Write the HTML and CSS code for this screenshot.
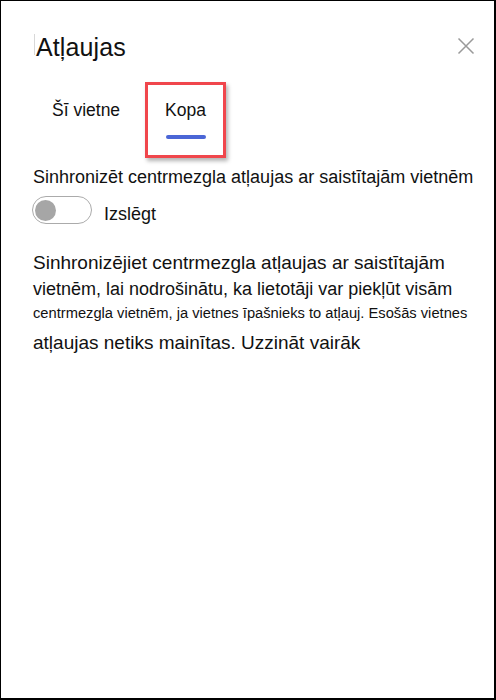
FILE: index.html
```html
<!DOCTYPE html>
<html lang="lv">
<head>
<meta charset="utf-8">
<title>Atļaujas</title>
<link rel="stylesheet" href="styles.css">
</head>
<body>
<div class="panel">
  <div class="header">
    <h1 class="title">Atļaujas</h1>
    <button class="close" aria-label="Aizvērt">
      <svg width="18" height="18" viewBox="0 0 18 18"><path d="M1.5 1.5 L16.5 16.5 M16.5 1.5 L1.5 16.5" stroke="#9a9a9a" stroke-width="1.5" fill="none"/></svg>
    </button>
  </div>
  <div class="tabs">
    <div class="tab">Šī vietne</div>
    <div class="tab active">Kopa<span class="bar"></span></div>
  </div>
  <div class="subtitle">Sinhronizēt centrmezgla atļaujas ar saistītajām vietnēm</div>
  <div class="toggle-row">
    <span class="toggle"><span class="knob"></span></span>
    <span class="toggle-label">Izslēgt</span>
  </div>
  <p class="desc">
    <span class="l1">Sinhronizējiet centrmezgla atļaujas ar saistītajām</span>
    <span class="l2">vietnēm, lai nodrošinātu, ka lietotāji var piekļūt visām</span>
    <span class="l3">centrmezgla vietnēm, ja vietnes īpašnieks to atļauj. Esošās vietnes</span>
    <span class="l4">atļaujas netiks mainītas. Uzzināt vairāk</span>
  </p>
</div>
</body>
</html>
```
FILE: styles.css
```css
html, body {
  margin: 0;
  padding: 0;
  background: #fff;
}
body {
  font-family: "Liberation Sans", Arial, sans-serif;
  color: #111;
}
.panel {
  box-sizing: border-box;
  width: 496px;
  height: 700px;
  border-top: 1px solid #000;
  border-left: 1px solid #000;
  border-right: 2px solid #000;
  border-bottom: 2px solid #000;
  padding: 31px 0 0 31px;
}
.header {
  display: flex;
  align-items: flex-start;
  justify-content: space-between;
  height: 30px;
}
.title {
  margin: 0;
  font-size: 25px;
  font-weight: normal;
  line-height: 30px;
  padding-left: 2px;
  letter-spacing: 0.1px;
}
.title::before {
  content: "";
  display: inline-block;
  width: 1px;
  height: 21px;
  background: #d8d8d8;
  margin-right: 1px;
  vertical-align: 1px;
}
.close {
  margin: 5px 19px 0 0;
  padding: 0;
  border: 0;
  background: none;
  width: 18px;
  height: 18px;
  display: flex;
}
.tabs {
  display: flex;
  gap: 5px;
  margin-top: 20px;
}
.tab {
  display: flex;
  flex-direction: column;
  align-items: center;
  border: 3px solid transparent;
  padding: 13px 17px 16px;
  font-size: 17.5px;
  line-height: 24px;
}
.tab .bar {
  display: block;
  width: 40px;
  height: 4px;
  border-radius: 2px;
  background: #4b66d6;
  margin-top: 13px;
}
.tab:not(.active)::after {
  content: "";
  display: block;
  height: 4px;
  margin-top: 13px;
}
.tab.active {
  border-color: #f0464c;
  box-shadow: 2px 3px 4px rgba(0, 0, 0, 0.3);
}
.subtitle {
  margin-top: 8px;
  font-size: 18px;
  line-height: 22px;
  padding-left: 1px;
}
.toggle-row {
  display: flex;
  align-items: flex-start;
  margin-top: 8px;
  gap: 12px;
}
.toggle {
  box-sizing: border-box;
  width: 60px;
  height: 28px;
  border: 1px solid #ababab;
  border-radius: 14px;
  padding: 2.5px 2px;
  display: flex;
}
.knob {
  width: 21px;
  height: 21px;
  border-radius: 50%;
  background: #a6a6a6;
}
.toggle-label {
  font-size: 18px;
  line-height: 22px;
  margin-top: 7px;
}
.desc {
  margin: 25px 0 0;
  padding-left: 1px;
}
.desc span {
  display: block;
  white-space: nowrap;
}
.l1 { font-size: 19px; line-height: 26px; }
.l2 { font-size: 18px; line-height: 26px; }
.l3 { font-size: 14.7px; line-height: 23px; }
.l4 { font-size: 19px; line-height: 36px; }
```
